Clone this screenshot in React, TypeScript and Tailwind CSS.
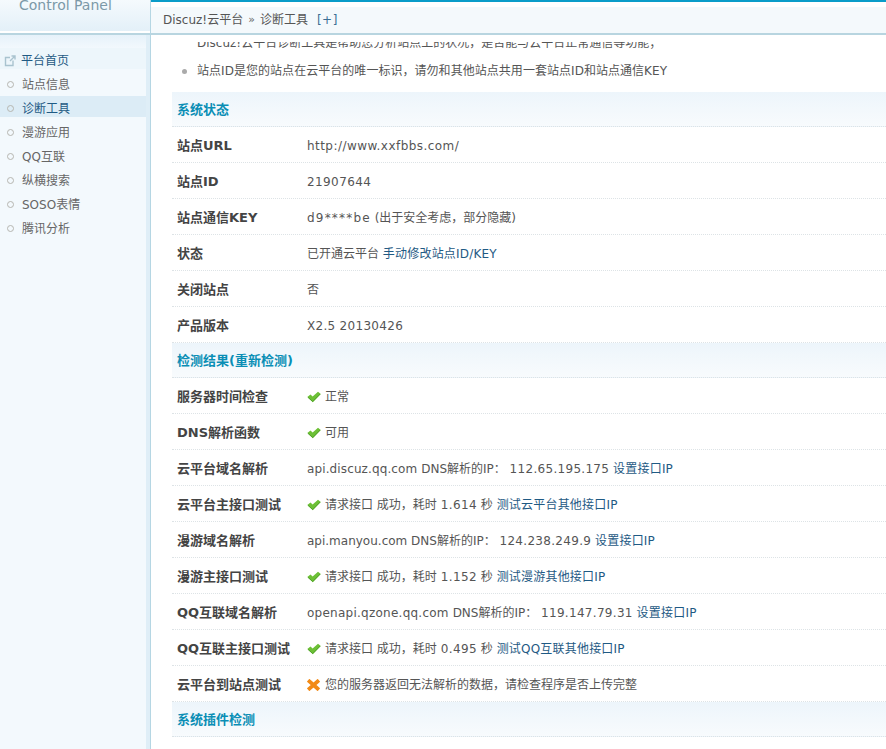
const font = { fontFamily: '"DejaVu Sans","Noto Sans CJK SC",sans-serif' };

function Check() {
  return (
    <svg width="14" height="12" viewBox="0 0 14 12" className="shrink-0">
      <path d="M0.3 6 L3.5 3.4 L5.6 5.4 L11 0.8 L13.8 3 L5.8 11.2 Z" fill="#6cc035" />
      <path d="M1 6.3 L5.7 10.6 L13.2 3" fill="none" stroke="#4f9e2a" strokeWidth="0.9" />
    </svg>
  );
}

function Cross() {
  return (
    <svg width="13" height="12" viewBox="0 0 13 12" className="shrink-0">
      <path d="M2.5 2.5 L10.5 9.5 M10.5 2.5 L2.5 9.5" stroke="#f28a16" strokeWidth="3.8" strokeLinecap="square" />
    </svg>
  );
}

function A({ children }: { children: React.ReactNode }) {
  return <span className="text-[#1f5a84] tracking-[0.2px]">{children}</span>;
}

function Section({ children }: { children: React.ReactNode }) {
  return (
    <div className="h-[35px] pt-[2px] pl-[5px] flex items-center text-[13px] font-bold text-[#0a8eb5] bg-gradient-to-b from-[#edf5fb] to-[#f8fbfd] border-b border-dotted border-[#dde3e6]">
      {children}
    </div>
  );
}

function Row({ label, children }: { label: string; children: React.ReactNode }) {
  return (
    <div className="h-[36px] pt-[2px] flex items-center border-b border-dotted border-[#dde3e6]">
      <div className="w-[135px] pl-[5px] shrink-0 text-[13px] font-bold text-[#444]">{label}</div>
      <div className="flex items-center text-[#555]">{children}</div>
    </div>
  );
}

function Ok({ children }: { children: React.ReactNode }) {
  return (
    <span className="flex items-center gap-[4px]">
      <Check />
      <span>{children}</span>
    </span>
  );
}

function Time({ children }: { children: React.ReactNode }) {
  return <span className="tracking-[0.4px]">{children}</span>;
}

const menu = ["站点信息", "诊断工具", "漫游应用", "QQ互联", "纵横搜索", "SOSO表情", "腾讯分析"];

export default function App() {
  return (
    <div style={font} className="w-[886px] h-[749px] overflow-hidden flex bg-white text-[12px] leading-[18px] text-[#555]">
      <aside className="w-[151px] shrink-0 flex flex-col bg-[#f3f9fd] border-r border-[#b5d6e3]">
        <div className="h-[35px] shrink-0 overflow-hidden border-b-2 border-[#b8d5e0] bg-white">
          <div className="h-[31px] pl-[19px] bg-gradient-to-b from-[#f5fafd] to-[#e3f0f8]">
            <div className="text-[14px] leading-[10px] text-[#7c99a8]">Control Panel</div>
          </div>
        </div>
        <div className="flex flex-1">
          <div className="w-[146px] pt-[13px] bg-[linear-gradient(#e6f2fa,#f3f9fd_14px)]">
            <div className="h-[21px] mb-[3px] pt-[4px] flex items-center bg-[#edf6fb] text-[#1f5a84]">
              <svg width="12" height="12" viewBox="0 0 12 12" className="ml-[4px] mr-[5px]" fill="none" stroke="#a9c3cf" strokeWidth="1.4">
                <path d="M9 5.5 V10.5 H1.5 V2.5 H6" />
                <path d="M6 6 L10.5 1.5 M7.5 1 H11 V4.5" />
              </svg>
              <span>平台首页</span>
            </div>
            {menu.map((m) => (
              <div key={m} className={"h-[21px] mb-[3px] pt-[4px] flex items-center " + (m === "诊断工具" ? "bg-[#dcecf6] text-[#1f5a84]" : "text-[#666]")}>
                <span className="w-[7px] h-[7px] rounded-full border border-[#b6b6b0] ml-[7px] mr-[8px]" />
                <span>{m}</span>
              </div>
            ))}
          </div>
          <div className="w-[4px] bg-[#dfeef7]" />
        </div>
      </aside>
      <main className="flex-1 min-w-0 flex flex-col">
        <div className="h-[35px] shrink-0 border-b-2 border-[#b8d5e0] flex flex-col">
          <div className="h-[2px] bg-[#0a9cc9]" />
          <div className="h-[5px] bg-white" />
          <div className="flex-1 flex items-center pl-[12px] bg-[#f4f9fc] text-[#555] gap-[5px]">
            <span>Discuz!云平台</span>
            <span className="text-[11px] text-[#666]">»</span>
            <span>诊断工具</span>
            <span className="ml-[4px] text-[#3a6f95] tracking-[0.5px]">[+]</span>
          </div>
        </div>
        <div className="mt-[7px] flex-1 overflow-hidden pl-[21px]">
          <div className="-mt-[8px] h-[18px] flex items-center pl-[25px] overflow-hidden">
            Discuz!云平台诊断工具是帮助您分析站点上的状况，是否能与云平台正常通信等功能；
          </div>
          <div className="mt-[10px] mb-[12px] h-[18px] flex items-center">
            <span className="w-[5px] h-[5px] rounded-full bg-[#aaa] ml-[10px] mr-[10px]" />
            <span className="tracking-[0.04px]">站点ID是您的站点在云平台的唯一标识，请勿和其他站点共用一套站点ID和站点通信KEY</span>
          </div>
          <Section>系统状态</Section>
          <Row label="站点URL"><span className="tracking-[0.45px]">http://www.xxfbbs.com/</span></Row>
          <Row label="站点ID"><span className="tracking-[0.4px]">21907644</span></Row>
          <Row label="站点通信KEY"><span><span className="tracking-[1.2px]">d9****be</span> (出于安全考虑，部分隐藏)</span></Row>
          <Row label="状态">
            <span>已开通云平台 <A>手动修改站点ID/KEY</A></span>
          </Row>
          <Row label="关闭站点">否</Row>
          <Row label="产品版本"><span className="tracking-[0.3px]">X2.5 20130426</span></Row>
          <Section>检测结果(重新检测)</Section>
          <Row label="服务器时间检查"><Ok>正常</Ok></Row>
          <Row label="DNS解析函数"><Ok>可用</Ok></Row>
          <Row label="云平台域名解析">
            <span><span className="tracking-[0.12px]">api.discuz.qq.com</span> DNS解析的IP： <span className="tracking-[0.3px]">112.65.195.175</span> <A>设置接口IP</A></span>
          </Row>
          <Row label="云平台主接口测试">
            <Ok>请求接口 成功，耗时 <Time>1.614</Time> 秒 <A>测试云平台其他接口IP</A></Ok>
          </Row>
          <Row label="漫游域名解析">
            <span>api.manyou.com DNS解析的IP： <span className="tracking-[0.3px]">124.238.249.9</span> <A>设置接口IP</A></span>
          </Row>
          <Row label="漫游主接口测试">
            <Ok>请求接口 成功，耗时 <Time>1.152</Time> 秒 <A>测试漫游其他接口IP</A></Ok>
          </Row>
          <Row label="QQ互联域名解析">
            <span><span className="tracking-[0.25px]">openapi.qzone.qq.com</span> DNS解析的IP： <span className="tracking-[0.3px]">119.147.79.31</span> <A>设置接口IP</A></span>
          </Row>
          <Row label="QQ互联主接口测试">
            <Ok>请求接口 成功，耗时 <Time>0.495</Time> 秒 <A>测试QQ互联其他接口IP</A></Ok>
          </Row>
          <Row label="云平台到站点测试">
            <span className="flex items-center gap-[5px]">
              <Cross />
              <span>您的服务器返回无法解析的数据，请检查程序是否上传完整</span>
            </span>
          </Row>
          <Section>系统插件检测</Section>
        </div>
      </main>
    </div>
  );
}
